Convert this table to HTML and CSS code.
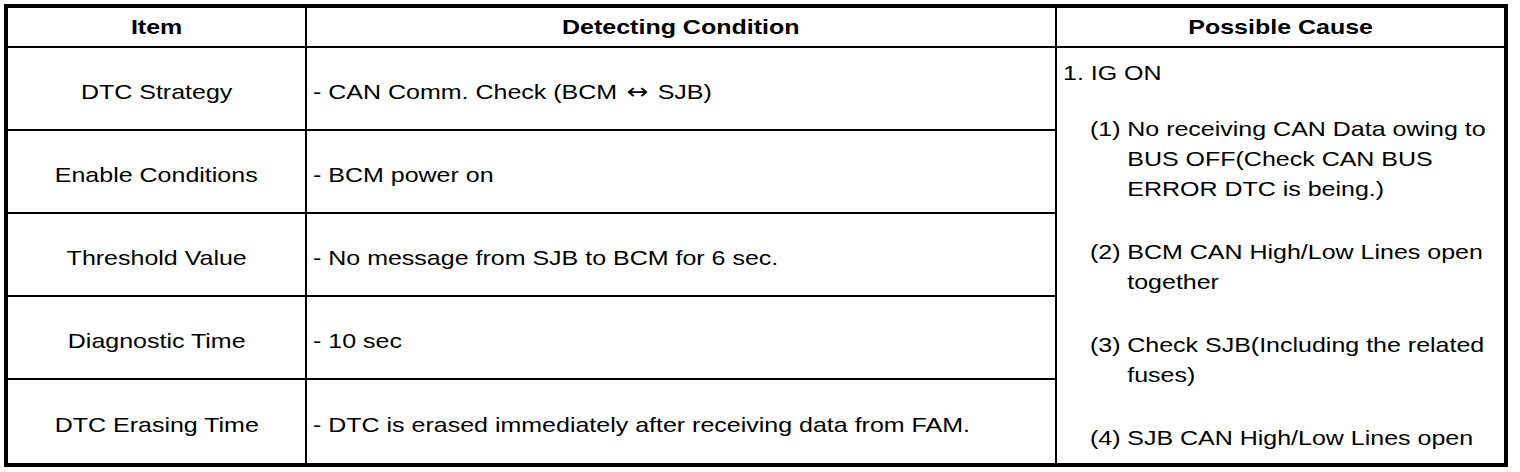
FILE: index.html
```html
<!DOCTYPE html>
<html lang="en">
<head>
<meta charset="utf-8">
<title>DTC Table</title>
<link rel="stylesheet" href="styles.css">
</head>
<body>
<table class="dtc">
  <colgroup>
    <col class="col-item">
    <col class="col-cond">
    <col class="col-cause">
  </colgroup>
  <thead>
    <tr>
      <th class="h-item"><span class="sx">Item</span></th>
      <th class="h-cond"><span class="sx">Detecting Condition</span></th>
      <th class="h-cause"><span class="sx">Possible Cause</span></th>
    </tr>
  </thead>
  <tbody>
    <tr>
      <td class="item"><span class="sx">DTC Strategy</span></td>
      <td class="cond"><span class="sx">- CAN Comm. Check (BCM <span class="arrow">&#8596;</span> SJB)</span></td>
      <td class="cause" rowspan="5">
        <div class="cause-inner">
          <p class="cause-head">1. IG ON</p>
          <ol class="sub">
            <li><span class="num">(1)</span><span class="txt">No receiving CAN Data owing to<br>BUS OFF(Check CAN BUS<br>ERROR DTC is being.)</span></li>
            <li><span class="num">(2)</span><span class="txt">BCM CAN High/Low Lines open<br>together</span></li>
            <li><span class="num">(3)</span><span class="txt">Check SJB(Including the related<br>fuses)</span></li>
            <li><span class="num">(4)</span><span class="txt">SJB CAN High/Low Lines open</span></li>
          </ol>
        </div>
      </td>
    </tr>
    <tr>
      <td class="item"><span class="sx">Enable Conditions</span></td>
      <td class="cond"><span class="sx">- BCM power on</span></td>
    </tr>
    <tr>
      <td class="item"><span class="sx">Threshold Value</span></td>
      <td class="cond"><span class="sx">- No message from SJB to BCM for 6 sec.</span></td>
    </tr>
    <tr>
      <td class="item"><span class="sx">Diagnostic Time</span></td>
      <td class="cond"><span class="sx">- 10 sec</span></td>
    </tr>
    <tr class="last">
      <td class="item"><span class="sx">DTC Erasing Time</span></td>
      <td class="cond"><span class="sx">- DTC is erased immediately after receiving data from FAM.</span></td>
    </tr>
  </tbody>
</table>
</body>
</html>
```

FILE: styles.css
```css
html, body {
  background: #fff;
}
body {
  margin: 4px;
  font-family: "Liberation Sans", Arial, Helvetica, sans-serif;
  font-size: 21px;
  color: #000;
}
.dtc {
  width: 1504px;
  table-layout: fixed;
  border-collapse: separate;
  border-spacing: 0;
  border: 4px solid #000;
}
.col-item { width: 299px; }
.col-cond { width: 750px; }
.col-cause { width: 447px; }

/* the source type is set wide: Helvetica-like glyphs stretched horizontally */
.sx {
  display: inline-block;
  white-space: nowrap;
  transform: scaleX(1.19);
  transform-origin: left center;
}
.dtc th .sx,
.dtc td.item .sx {
  transform-origin: center center;
}
.arrow {
  font-family: "DejaVu Sans", sans-serif;
  font-size: 22px;
  line-height: 1;
  margin: 0 2px;
}

.dtc th {
  height: 38px;
  padding: 0;
  font-weight: bold;
  text-align: center;
  vertical-align: middle;
  border-bottom: 2px solid #000;
  line-height: 24px;
}
.dtc th.h-item,
.dtc th.h-cond {
  border-right: 2px solid #000;
}
.dtc td {
  padding: 0;
  line-height: 30px;
}
.dtc td.item,
.dtc td.cond {
  height: 75px;
  padding-top: 6px;
  vertical-align: middle;
  border-right: 2px solid #000;
  border-bottom: 2px solid #000;
}
.dtc tr.last td.item,
.dtc tr.last td.cond {
  height: 77px;
  border-bottom: none;
}
.dtc td.item {
  text-align: center;
}
.dtc td.cond {
  padding-left: 6px;
  text-align: left;
}
.dtc td.cause {
  vertical-align: top;
  padding: 10px 0 0 6px;
}
.cause-inner {
  width: 370px;
  white-space: nowrap;
  transform: scaleX(1.19);
  transform-origin: left top;
}
.cause-head {
  margin: 0 0 26px 0;
}
.sub {
  list-style: none;
  margin: 0;
  padding: 0 0 0 22.7px;
}
.sub li {
  display: flex;
}
.sub li + li {
  margin-top: 33px;
}
.num {
  flex: 0 0 31.3px;
}
.txt {
  flex: 1 1 auto;
}
```
